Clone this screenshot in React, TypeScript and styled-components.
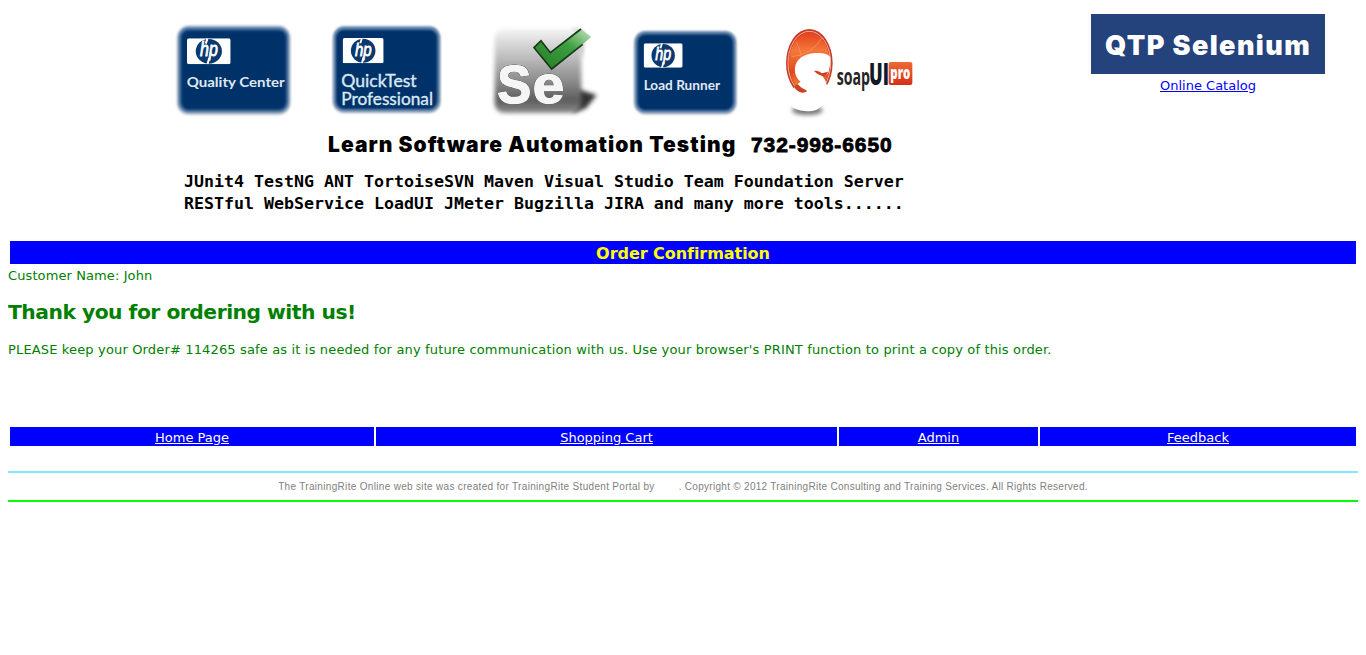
import React from "react";
import styled, { createGlobalStyle } from "styled-components";

const GlobalStyle = createGlobalStyle`
  body {
    margin: 8px;
    background: #fff;
    font-family: "DejaVu Sans", Verdana, sans-serif;
    font-size: 13px;
    color: #008000;
  }
`;

const Header = styled.header`
  display: flex;
  height: 233px;
`;

const Banner = styled.div`
  width: 1083px;
  padding-top: 7px;
  box-sizing: border-box;
  color: #000;
  white-space: pre;
`;

const LogoRow = styled.div`
  display: flex;
  padding-left: 157px;
  height: 110px;
`;

const Logo = styled.svg<{ $width?: number; $gap?: number }>`
  display: block;
  flex: none;
  width: ${(p) => p.$width ?? 140}px;
  height: 110px;
  margin-right: ${(p) => p.$gap ?? 0}px;
`;

const Headline = styled.div`
  display: flex;
  padding: 6px 0 0 320px;
  font: 900 21px/28px Inter, "Liberation Sans", sans-serif;
`;

const Slogan = styled.span`
  width: 423px;
  letter-spacing: 1.05px;
`;

const Phone = styled.span`
  font-family: "Liberation Sans", sans-serif;
  letter-spacing: 0.9px;
  -webkit-text-stroke: 0.8px #000;
`;

const ToolList = styled.div`
  padding: 12px 0 0 176px;
  font: bold 16.6px/22px "DejaVu Sans Mono", monospace;
  letter-spacing: 0.007px;
`;

const Brand = styled.div`
  display: flex;
  flex-direction: column;
  align-items: center;
  width: 234px;
  padding-top: 6px;
`;

const BrandBox = styled.div`
  width: 234px;
  height: 60px;
  background: #24427c;
  color: #fff;
  font: 900 27px/63px Inter, "Liberation Sans", sans-serif;
  letter-spacing: 1.4px;
  text-align: center;
  white-space: nowrap;
`;

const CatalogLink = styled.a`
  margin-top: 4px;
  line-height: 16px;
  color: #0000ff;
  text-decoration: underline;
`;

const TitleBar = styled.h1`
  margin: 0 2px;
  height: 23px;
  background: #0000ff;
  color: #ffff00;
  font-size: 16px;
  line-height: 25px;
  text-align: center;
  letter-spacing: -0.05px;
`;

const Customer = styled.div`
  margin-top: 4px;
  line-height: 16px;
  letter-spacing: 0.1px;
`;

const Thanks = styled.h2`
  margin: 15px 0 0;
  font-size: 20.3px;
  line-height: 26px;
  letter-spacing: -0.5px;
`;

const Notice = styled.p`
  margin: 17px 0 0;
  line-height: 16px;
  letter-spacing: 0.152px;
  white-space: nowrap;
`;

const Nav = styled.nav`
  display: grid;
  grid-template-columns: 364px 461px 199px 316px;
  gap: 2px;
  margin: 69px 2px 0;
`;

const NavCell = styled.div`
  height: 19px;
  background: #0000ff;
  text-align: center;
  line-height: 21px;
`;

const NavLink = styled.a`
  color: #fff;
  text-decoration: underline;
`;

const Rule = styled.div<{ $color: string }>`
  height: 2px;
  background: ${(p) => p.$color};
`;

const Footer = styled.footer`
  margin-top: 25px;
`;

const Copyright = styled.div`
  display: flex;
  justify-content: center;
  gap: 24px;
  height: 27px;
  font: 10px/28px "Liberation Sans", Arial, sans-serif;
  color: #808080;
  white-space: nowrap;
`;

const FooterText = styled.span<{ $spacing: number }>`
  letter-spacing: ${(p) => p.$spacing}px;
`;

function HpMark({ x, y, w, h }: { x: number; y: number; w: number; h: number }) {
  return (
    <svg x={x} y={y} width={w} height={h} viewBox="0 0 130 78" preserveAspectRatio="none">
      <rect width="130" height="78" rx="6" fill="#fff" />
      <ellipse cx="65" cy="39" rx="39" ry="37" fill="#0b386f" />
      <text
        x="39"
        y="54"
        fontFamily="Liberation Sans, sans-serif"
        fontStyle="italic"
        fontSize="58"
        fill="#fff"
        stroke="#fff"
        strokeWidth="2.5"
        textLength="53"
        lengthAdjust="spacingAndGlyphs"
      >
        hp
      </text>
      <path d="M56 16L61 0M61 78L66 60" stroke="#fff" strokeWidth="6" />
    </svg>
  );
}

function BlueTile({ id, x, y, w, h, soft }: { id: string; x: number; y: number; w: number; h: number; soft: number }) {
  return (
    <>
      <defs>
        <filter id={id} x="-10%" y="-10%" width="120%" height="120%">
          <feGaussianBlur stdDeviation={soft} />
        </filter>
      </defs>
      <rect x={x - 2} y={y + 5} width={w + 4} height={h} rx="34" fill="#c6cad1" filter={`url(#${id})`} />
      <rect x={x} y={y} width={w} height={h} rx="32" fill="#6486ac" filter={`url(#${id})`} />
      <rect x={x + 8} y={y + 10} width={w - 16} height={h - 18} rx="24" fill="#03336a" filter={`url(#${id})`} />
    </>
  );
}

const tileFont = "Lato, sans-serif";

function QualityCenterLogo() {
  return (
    <Logo viewBox="0 0 420 330" $gap={15}>
      <BlueTile id="qc" x={39} y={34} w={334} h={260} soft={4} />
      <HpMark x={66} y={70} w={131} h={78} />
      <text x="65" y="217" fontFamily={tileFont} fontWeight="700" fontSize="40" fill="#dfe8f2" textLength="294" lengthAdjust="spacingAndGlyphs">
        Quality Center
      </text>
    </Logo>
  );
}

function QuickTestLogo() {
  return (
    <Logo viewBox="0 0 420 330" $gap={20}>
      <BlueTile id="qt" x={40} y={34} w={320} h={256} soft={3.5} />
      <HpMark x={68} y={69} w={123} h={76} />
      <g fontFamily={tileFont} fontSize="50" fill="#dce8f3" stroke="#dce8f3" strokeWidth="1">
        <text x="64" y="217" textLength="226" lengthAdjust="spacingAndGlyphs">QuickTest</text>
        <text x="64" y="270" textLength="275" lengthAdjust="spacingAndGlyphs">Professional</text>
      </g>
    </Logo>
  );
}

const SeLetters = styled.g`
  font-family: "Liberation Sans", sans-serif;
  font-weight: 700;
  fill: #f5f5f5;
  stroke: #f5f5f5;
  stroke-width: 5;
  filter: drop-shadow(0 0 2px #222) drop-shadow(0 0 2px #333);
`;

function SeleniumLogo() {
  return (
    <Logo viewBox="0 0 420 330">
      <defs>
        <linearGradient id="seBody" x1="0" y1="0" x2="0" y2="1">
          <stop offset="0" stopColor="#f4f4f4" />
          <stop offset="0.25" stopColor="#cccccc" />
          <stop offset="0.6" stopColor="#8f8f8f" />
          <stop offset="0.85" stopColor="#5c5c5c" />
          <stop offset="1" stopColor="#8c8c8c" />
        </linearGradient>
        <linearGradient id="seCheck" x1="0" y1="1" x2="1" y2="0">
          <stop offset="0" stopColor="#237a26" />
          <stop offset="0.6" stopColor="#3da040" />
          <stop offset="1" stopColor="#c9e7c7" />
        </linearGradient>
        <filter id="seSoft" x="-20%" y="-20%" width="140%" height="140%">
          <feGaussianBlur stdDeviation="6" />
        </filter>
      </defs>
      <path d="M285 220L350 240L318 280L280 293Z" fill="#333" filter="url(#seSoft)" />
      <path d="M278 40L312 52L306 130Z" fill="#aaa" filter="url(#seSoft)" />
      <rect x="44" y="42" width="260" height="252" rx="28" fill="url(#seBody)" filter="url(#seSoft)" />
      <SeLetters>
        <text x="52" y="263" fontSize="162" textLength="102" lengthAdjust="spacingAndGlyphs">S</text>
        <text x="158" y="263" fontSize="158" textLength="94" lengthAdjust="spacingAndGlyphs">e</text>
      </SeLetters>
      <path d="M162 98L183 77L211 113L303 42L334 66L215 162Z" fill="url(#seCheck)" />
      <path d="M303 42L211 113L183 77L162 98L215 162L308 88" fill="none" stroke="#17381a" strokeWidth="5" />
    </Logo>
  );
}

function LoadRunnerLogo() {
  return (
    <Logo viewBox="0 0 420 330" $gap={10}>
      <BlueTile id="lr" x={44} y={48} w={304} h={246} soft={2.5} />
      <HpMark x={71} y={85} w={117} h={73} />
      <text x="71" y="225" fontFamily={tileFont} fontWeight="700" fontSize="39" fill="#e1e9f2" textLength="229" lengthAdjust="spacingAndGlyphs">
        Load Runner
      </text>
    </Logo>
  );
}

function SoapUiLogo() {
  return (
    <Logo viewBox="0 0 480 330" $width={160}>
      <defs>
        <linearGradient id="soapBody" x1="0" y1="0" x2="0" y2="1">
          <stop offset="0" stopColor="#e5401c" />
          <stop offset="0.3" stopColor="#f4783a" />
          <stop offset="0.65" stopColor="#e1481b" />
          <stop offset="1" stopColor="#f6a345" />
        </linearGradient>
        <linearGradient id="soapPro" x1="0" y1="0" x2="0" y2="1">
          <stop offset="0" stopColor="#ee6a35" />
          <stop offset="1" stopColor="#d62f1b" />
        </linearGradient>
        <filter id="soapSoft" x="-20%" y="-50%" width="140%" height="200%">
          <feGaussianBlur stdDeviation="7" />
        </filter>
      </defs>
      <ellipse cx="112" cy="286" rx="46" ry="14" fill="#777" filter="url(#soapSoft)" />
      <ellipse cx="118" cy="144" rx="70" ry="102" fill="#c93a24" />
      <ellipse cx="118" cy="144" rx="64" ry="95" fill="none" stroke="#f0b09d" strokeWidth="3" />
      <ellipse cx="118" cy="144" rx="61" ry="92" fill="url(#soapBody)" />
      <path d="M65 125Q125 120 156 68M80 82Q104 130 92 190" fill="none" stroke="#f8a06b" strokeWidth="3" opacity="0.6" />
      <path
        d="M180 126C176 116 150 112 130 115C100 118 78 134 75 158C73 178 80 190 92 200C84 206 76 214 70 220C62 236 60 256 65 274C82 290 118 292 140 284C162 272 174 250 173 224C171 206 166 194 158 184C168 182 174 178 176 170C180 156 182 140 180 126Z"
        fill="#fff"
      />
      <path
        d="M132 168Q144 164 156 175L174 170Q170 184 158 184Q142 180 132 168ZM72 216Q82 232 98 233Q114 232 109 226Q94 220 82 207Z"
        fill="#cf3f1e"
      />
      <g fontFamily="Open Sans, sans-serif">
        <text x="200" y="211" fontWeight="700" fontSize="70" fill="#252525" textLength="100" lengthAdjust="spacingAndGlyphs">soap</text>
        <text x="297" y="209" fontWeight="800" fontSize="90" fill="#111827" textLength="60" lengthAdjust="spacingAndGlyphs">UI</text>
        <rect x="356" y="141" width="71" height="69" rx="6" fill="url(#soapPro)" />
        <text x="361" y="193" fontWeight="800" fontSize="50" fill="#fff" textLength="60" lengthAdjust="spacingAndGlyphs">pro</text>
      </g>
    </Logo>
  );
}

const links = ["Home Page", "Shopping Cart", "Admin", "Feedback"];

export default function App() {
  return (
    <>
      <GlobalStyle />
      <Header>
        <Banner>
          <LogoRow>
            <QualityCenterLogo />
            <QuickTestLogo />
            <SeleniumLogo />
            <LoadRunnerLogo />
            <SoapUiLogo />
          </LogoRow>
          <Headline>
            <Slogan>Learn Software Automation Testing</Slogan>
            <Phone>732-998-6650</Phone>
          </Headline>
          <ToolList>
            <div>JUnit4 TestNG ANT TortoiseSVN Maven Visual Studio Team Foundation Server</div>
            <div>RESTful WebService LoadUI JMeter Bugzilla JIRA and many more tools......</div>
          </ToolList>
        </Banner>
        <Brand>
          <BrandBox>QTP Selenium</BrandBox>
          <CatalogLink>Online Catalog</CatalogLink>
        </Brand>
      </Header>
      <main>
        <TitleBar>Order Confirmation</TitleBar>
        <Customer>Customer Name: John</Customer>
        <Thanks>Thank you for ordering with us!</Thanks>
        <Notice>
          PLEASE keep your Order# 114265 safe as it is needed for any future communication with us. Use your browser's
          PRINT function to print a copy of this order.
        </Notice>
      </main>
      <Nav>
        {links.map((label) => (
          <NavCell key={label}>
            <NavLink>{label}</NavLink>
          </NavCell>
        ))}
      </Nav>
      <Footer>
        <Rule $color="#84e6fa" />
        <Copyright>
          <FooterText $spacing={0.32}>The TrainingRite Online web site was created for TrainingRite Student Portal by</FooterText>
          <FooterText $spacing={0.29}>. Copyright © 2012 TrainingRite Consulting and Training Services. All Rights Reserved.</FooterText>
        </Copyright>
        <Rule $color="#00ff00" />
      </Footer>
    </>
  );
}
